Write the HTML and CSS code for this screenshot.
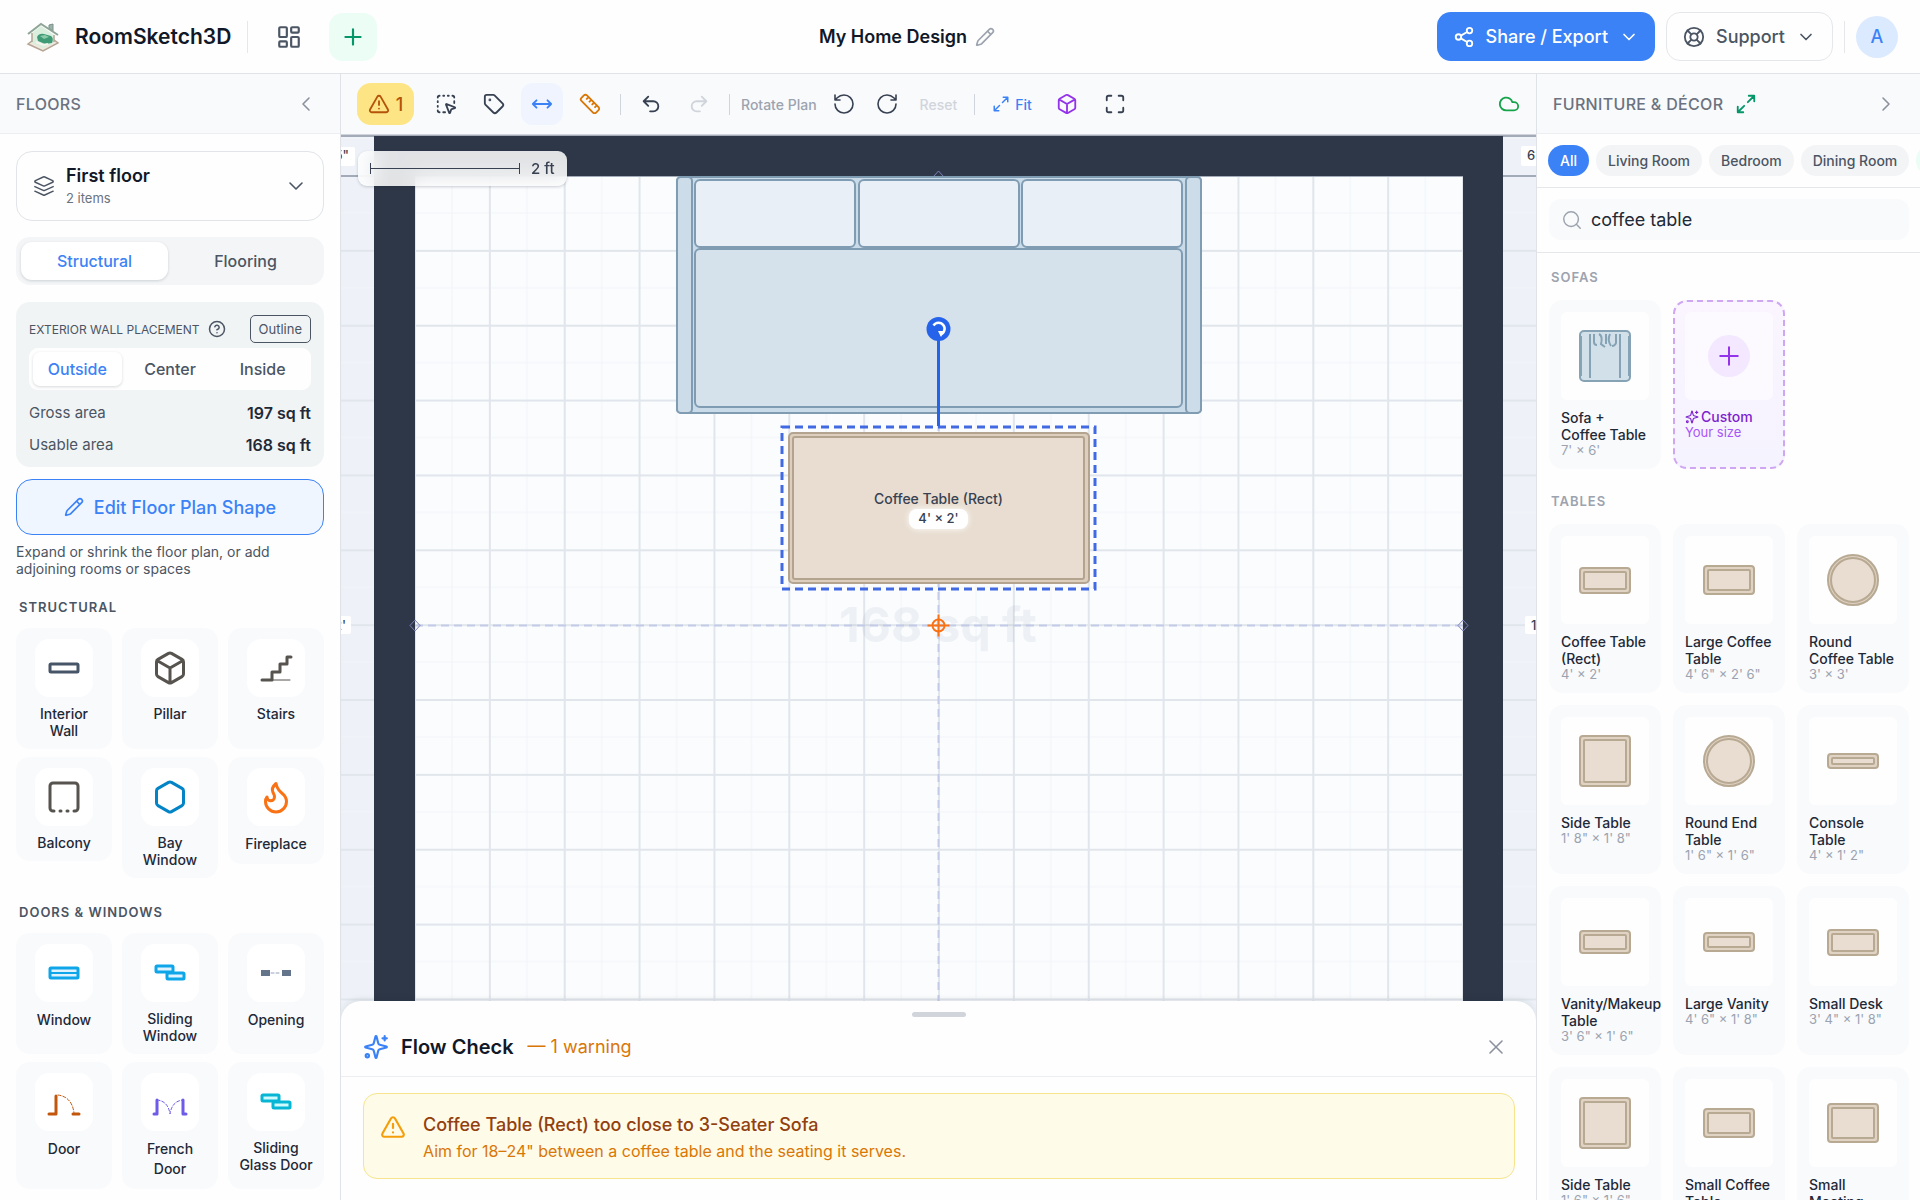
FILE: index.html
```html
<!DOCTYPE html>
<html lang="en">
<head>
<meta charset="utf-8">
<meta name="viewport" content="width=device-width, initial-scale=1">
<title>RoomSketch3D</title>
<link rel="stylesheet" href="styles.css">
</head>
<body>
<svg class="sprite" aria-hidden="true">
  <symbol id="i-dashboard" viewBox="0 0 24 24"><rect x="3" y="3" width="7" height="9" rx="1"/><rect x="14" y="3" width="7" height="5" rx="1"/><rect x="14" y="12" width="7" height="9" rx="1"/><rect x="3" y="16" width="7" height="5" rx="1"/></symbol>
  <symbol id="i-plus" viewBox="0 0 24 24"><path d="M5 12h14M12 5v14"/></symbol>
  <symbol id="i-pencil" viewBox="0 0 24 24"><path d="M21.174 6.812a1 1 0 0 0-3.986-3.987L3.842 16.174a2 2 0 0 0-.5.83l-1.321 4.352a.5.5 0 0 0 .623.622l4.353-1.32a2 2 0 0 0 .83-.497zM15 5l4 4"/></symbol>
  <symbol id="i-share" viewBox="0 0 24 24"><circle cx="18" cy="5" r="3"/><circle cx="6" cy="12" r="3"/><circle cx="18" cy="19" r="3"/><path d="M8.59 13.51l6.83 3.98M15.41 6.51l-6.82 3.98"/></symbol>
  <symbol id="i-buoy" viewBox="0 0 24 24"><circle cx="12" cy="12" r="10"/><circle cx="12" cy="12" r="4"/><path d="M4.93 4.93l4.24 4.24M14.83 9.17l4.24-4.24M14.83 14.83l4.24 4.24M9.17 14.83l-4.24 4.24"/></symbol>
  <symbol id="i-down" viewBox="0 0 24 24"><path d="M6 9l6 6 6-6"/></symbol>
  <symbol id="i-left" viewBox="0 0 24 24"><path d="M15 18l-6-6 6-6"/></symbol>
  <symbol id="i-right" viewBox="0 0 24 24"><path d="M9 18l6-6-6-6"/></symbol>
  <symbol id="i-layers" viewBox="0 0 24 24"><path d="M12.83 2.18a2 2 0 0 0-1.66 0L2.6 6.08a1 1 0 0 0 0 1.83l8.58 3.91a2 2 0 0 0 1.66 0l8.58-3.9a1 1 0 0 0 0-1.83ZM22 17.65l-9.17 4.16a2 2 0 0 1-1.66 0L2 17.65M22 12.65l-9.17 4.16a2 2 0 0 1-1.66 0L2 12.65"/></symbol>
  <symbol id="i-help" viewBox="0 0 24 24"><circle cx="12" cy="12" r="10"/><path d="M9.09 9a3 3 0 0 1 5.83 1c0 2-3 3-3 3M12 17h.01"/></symbol>
  <symbol id="i-alert" viewBox="0 0 24 24"><path d="M21.73 18l-8-14a2 2 0 0 0-3.48 0l-8 14A2 2 0 0 0 4 21h16a2 2 0 0 0 1.73-3M12 9v4M12 17h.01"/></symbol>
  <symbol id="i-select" viewBox="0 0 24 24"><path d="M12.034 12.681a.498.498 0 0 1 .647-.647l9 3.5a.5.5 0 0 1-.033.943l-3.444 1.068a1 1 0 0 0-.66.66l-1.067 3.443a.5.5 0 0 1-.943.033zM5 3a2 2 0 0 0-2 2M19 3a2 2 0 0 1 2 2M5 21a2 2 0 0 1-2-2M9 3h1M9 21h2M14 3h1M3 9v1M21 9v2M3 14v1"/></symbol>
  <symbol id="i-tag" viewBox="0 0 24 24"><path d="M12.586 2.586A2 2 0 0 0 11.172 2H4a2 2 0 0 0-2 2v7.172a2 2 0 0 0 .586 1.414l8.704 8.704a2.426 2.426 0 0 0 3.42 0l6.58-6.58a2.426 2.426 0 0 0 0-3.42z"/><circle cx="7.5" cy="7.5" r=".5"/></symbol>
  <symbol id="i-horizontal" viewBox="0 0 24 24"><path d="M18 8l4 4-4 4M2 12h20M6 8l-4 4 4 4"/></symbol>
  <symbol id="i-ruler" viewBox="0 0 24 24"><path d="M21.3 15.3a2.4 2.4 0 0 1 0 3.4l-2.6 2.6a2.4 2.4 0 0 1-3.4 0L2.7 8.7a2.41 2.41 0 0 1 0-3.4l2.6-2.6a2.41 2.41 0 0 1 3.4 0ZM14.5 12.5l2-2M11.5 9.5l2-2M8.5 6.5l2-2M17.5 15.5l2-2"/></symbol>
  <symbol id="i-undo" viewBox="0 0 24 24"><path d="M9 14L4 9l5-5M4 9h10.5a5.5 5.5 0 0 1 0 11H11"/></symbol>
  <symbol id="i-redo" viewBox="0 0 24 24"><path d="M15 14l5-5-5-5M20 9H9.500a5.500 5.500 0 0 0 0 11H13"/></symbol>
  <symbol id="i-ccw" viewBox="0 0 24 24"><path d="M3 12a9 9 0 1 0 9-9 9.750 9.750 0 0 0-6.740 2.740L3 8M3 3v5h5"/></symbol>
  <symbol id="i-cw" viewBox="0 0 24 24"><path d="M21 12a9 9 0 1 1-9-9c2.520 0 4.930 1 6.740 2.740L21 8M21 3v5h-5"/></symbol>
  <symbol id="i-expand" viewBox="0 0 24 24"><path d="M15 3h6v6M9 21H3v-6M21 3l-7 7M3 21l7-7"/></symbol>
  <symbol id="i-box" viewBox="0 0 24 24"><path d="M21 8a2 2 0 0 0-1-1.730l-7-4a2 2 0 0 0-2 0l-7 4A2 2 0 0 0 3 8v8a2 2 0 0 0 1 1.730l7 4a2 2 0 0 0 2 0l7-4A2 2 0 0 0 21 16ZM3.300 7l8.700 5 8.700-5M12 22V12"/></symbol>
  <symbol id="i-hexagon" viewBox="0 0 24 24"><path d="M21 16V8a2 2 0 0 0-1-1.730l-7-4a2 2 0 0 0-2 0l-7 4A2 2 0 0 0 3 8v8a2 2 0 0 0 1 1.730l7 4a2 2 0 0 0 2 0l7-4A2 2 0 0 0 21 16z"/></symbol>
  <symbol id="i-full" viewBox="0 0 24 24"><path d="M8 3H5a2 2 0 0 0-2 2v3M21 8V5a2 2 0 0 0-2-2h-3M3 16v3a2 2 0 0 0 2 2h3M16 21h3a2 2 0 0 0 2-2v-3"/></symbol>
  <symbol id="i-cloud" viewBox="0 0 24 24"><path d="M17.500 19H9a7 7 0 1 1 6.710-9h1.790a4.500 4.500 0 1 1 0 9Z"/></symbol>
  <symbol id="i-search" viewBox="0 0 24 24"><circle cx="11" cy="11" r="8"/><path d="M21 21l-4.300-4.300"/></symbol>
  <symbol id="i-close" viewBox="0 0 24 24"><path d="M18 6L6 18M6 6l12 12"/></symbol>
  <symbol id="i-flame" viewBox="0 0 24 24"><path d="M8.500 14.500A2.500 2.500 0 0 0 11 12c0-1.380-.5-2-1-3-1.072-2.143-.224-4.054 2-6 .5 2.500 2 4.900 4 6.500 2 1.600 3 3.500 3 5.500a7 7 0 1 1-14 0c0-1.153.433-2.294 1-3a2.500 2.500 0 0 0 2.500 2.500z"/></symbol>
  <symbol id="i-sparkles" viewBox="0 0 24 24"><path d="M9.937 15.500A2 2 0 0 0 8.500 14.063l-6.135-1.582a.5.5 0 0 1 0-.962L8.500 9.936A2 2 0 0 0 9.937 8.500l1.582-6.135a.5.5 0 0 1 .963 0L14.063 8.500A2 2 0 0 0 15.500 9.937l6.135 1.581a.5.5 0 0 1 0 .964L15.500 14.063a2 2 0 0 0-1.437 1.437l-1.582 6.135a.5.5 0 0 1-.963 0zM20 2v4M22 4h-4"/><circle cx="4" cy="20" r="1.500"/></symbol>
</svg>

<div class="app">
  <header class="topbar">
    <div class="brand">
      <svg class="logo" viewBox="0 0 34 32" aria-hidden="true">
        <path d="M2 23l4-3 22-1 4 3-15 8z" fill="#efe8de" stroke="#b5a595" stroke-width="1.500"/>
        <path d="M6 12L15 5l13 9v8l-11 5-11-5z" fill="#d9eedd"/>
        <path d="M23 4l4-1v7l-4-3z" fill="#9db3ad" stroke="#78938a"/>
        <path d="M2 13L15 3l17 11" fill="none" stroke="#8fa596" stroke-width="2"/>
        <path d="M6 12v9M28 14v7" stroke="#b5a595" stroke-width="1.500"/>
        <path d="M11 16q2-4 7-3l7 2q3 2 1 7l-7 1-7-3z" fill="#3f9a75"/>
        <path d="M14 15l5-1 4 2-5 2z" fill="#8bcbaa"/>
        <path d="M10 21l7 3 5-1" fill="none" stroke="#f6f2ec" stroke-width="2"/>
      </svg>
      <span class="brand-name">RoomSketch3D</span>
      <span class="rule"></span>
      <button class="icon-btn" aria-label="Dashboard"><svg class="icon s26"><use href="#i-dashboard"/></svg></button>
      <button class="icon-btn add" aria-label="New plan"><svg class="icon s26"><use href="#i-plus"/></svg></button>
    </div>
    <button class="title-btn"><span>My Home Design</span><svg class="icon s20"><use href="#i-pencil"/></svg></button>
    <div class="actions">
      <button class="btn primary"><svg class="icon s22"><use href="#i-share"/></svg><span>Share / Export</span><svg class="icon s20"><use href="#i-down"/></svg></button>
      <button class="btn outline"><svg class="icon s22"><use href="#i-buoy"/></svg><span>Support</span><svg class="icon s20"><use href="#i-down"/></svg></button>
      <span class="rule"></span>
      <button class="avatar">A</button>
    </div>
  </header>

  <div class="workspace">
    <aside class="panel left">
      <div class="panel-head"><h2>FLOORS</h2><button class="plain" aria-label="Collapse floors"><svg class="icon s24 thin"><use href="#i-left"/></svg></button></div>
      <div class="left-body">
        <button class="floor">
          <svg class="icon s22 thin"><use href="#i-layers"/></svg>
          <span class="floor-text"><b>First floor</b><small>2 items</small></span>
          <svg class="icon s24 thin"><use href="#i-down"/></svg>
        </button>
        <div class="tabs"><button class="on">Structural</button><button>Flooring</button></div>
        <section class="placement">
          <div class="placement-head"><span>EXTERIOR WALL PLACEMENT</span><svg class="icon s18"><use href="#i-help"/></svg><button>Outline</button></div>
          <div class="segment"><button class="on">Outside</button><button>Center</button><button>Inside</button></div>
          <dl><div><dt>Gross area</dt><dd>197 sq ft</dd></div><div><dt>Usable area</dt><dd>168 sq ft</dd></div></dl>
        </section>
        <button class="edit"><svg class="icon s20"><use href="#i-pencil"/></svg><span>Edit Floor Plan Shape</span></button>
        <p class="hint">Expand or shrink the floor plan, or add adjoining rooms or spaces</p>

        <section class="group">
          <h3>STRUCTURAL</h3>
          <div class="tiles">
            <button class="tile"><span class="tile-icon"><svg viewBox="0 0 36 36" class="slate"><rect x="4" y="14" width="28" height="8" rx="1"/></svg></span><span class="tight">Interior Wall</span></button>
            <button class="tile"><span class="tile-icon"><svg class="icon s36 stone"><use href="#i-box"/></svg></span><span class="tight">Pillar</span></button>
            <button class="tile"><span class="tile-icon"><svg viewBox="0 0 36 36" class="stone"><path d="M4 30h28" stroke-width="1" /><path d="M4 30h10v-8h8v-8h7V7h4"/></svg></span><span class="tight">Stairs</span></button>
            <button class="tile short"><span class="tile-icon"><svg viewBox="0 0 36 36" class="stone"><path d="M8 32H7a3 3 0 0 1-3-3V7a3 3 0 0 1 3-3h22a3 3 0 0 1 3 3v22a3 3 0 0 1-3 3h-1M14 32h1M21 32h1"/></svg></span><span class="tight">Balcony</span></button>
            <button class="tile"><span class="tile-icon"><svg class="icon s36 blue"><use href="#i-hexagon"/></svg></span><span class="tight">Bay Window</span></button>
            <button class="tile short"><span class="tile-icon"><svg class="icon s36 orange"><use href="#i-flame"/></svg></span><span>Fireplace</span></button>
          </div>
        </section>

        <section class="group">
          <h3>DOORS &amp; WINDOWS</h3>
          <div class="tiles">
            <button class="tile"><span class="tile-icon"><svg viewBox="0 0 36 36" class="sky"><rect x="4" y="13" width="28" height="10" rx="1" fill="#e0f2fe"/><path d="M4 18h28" stroke-width="2"/></svg></span><span>Window</span></button>
            <button class="tile"><span class="tile-icon"><svg viewBox="0 0 36 36" class="sky"><rect x="4" y="11" width="17" height="6" rx="1" fill="#e0f2fe"/><rect x="15" y="18" width="17" height="6" rx="1" fill="#e0f2fe"/></svg></span><span class="tight">Sliding Window</span></button>
            <button class="tile"><span class="tile-icon"><svg viewBox="0 0 36 36"><path d="M3 15h9v6H3zM24 15h9v6h-9z" fill="#64748b"/><path d="M13 18h10" stroke="#94a3b8" stroke-width="1" stroke-dasharray="3 2"/></svg></span><span>Opening</span></button>
            <button class="tile"><span class="tile-icon"><svg viewBox="0 0 36 36" class="rust"><path d="M3 30h7V12M27 30h6"/><path d="M12 11q14 2 16 18" stroke-width="1" stroke-dasharray="3 2"/></svg></span><span>Door</span></button>
            <button class="tile"><span class="tile-icon"><svg viewBox="0 0 36 36" class="violet"><path d="M2 30h3V16M34 30h-3V16"/><path d="M5 16q11 1 13 14Q20 17 31 16" stroke-width="1" stroke-dasharray="3 2"/></svg></span><span>French Door</span></button>
            <button class="tile"><span class="tile-icon"><svg viewBox="0 0 36 36" class="teal"><rect x="4" y="11" width="17" height="6" rx="1" fill="#cffafe"/><rect x="15" y="18" width="17" height="6" rx="1" fill="#cffafe"/></svg></span><span class="tight">Sliding Glass Door</span></button>
          </div>
        </section>
      </div>
    </aside>

    <main class="center">
      <div class="toolbar">
        <button class="warn"><svg class="icon s22"><use href="#i-alert"/></svg>1</button>
        <button class="tool" aria-label="Select"><svg class="icon s22"><use href="#i-select"/></svg></button>
        <button class="tool" aria-label="Labels"><svg class="icon s22"><use href="#i-tag"/></svg></button>
        <button class="tool active" aria-label="Dimensions"><svg class="icon s22"><use href="#i-horizontal"/></svg></button>
        <button class="tool amber" aria-label="Measure"><svg class="icon s22"><use href="#i-ruler"/></svg></button>
        <span class="sep"></span>
        <button class="tool" aria-label="Undo"><svg class="icon s22"><use href="#i-undo"/></svg></button>
        <button class="tool off" aria-label="Redo" disabled><svg class="icon s22"><use href="#i-redo"/></svg></button>
        <span class="sep"></span>
        <span class="tool-label">Rotate Plan</span>
        <button class="tool slim" aria-label="Rotate left"><svg class="icon s24 thin"><use href="#i-ccw"/></svg></button>
        <button class="tool slim" aria-label="Rotate right"><svg class="icon s24 thin"><use href="#i-cw"/></svg></button>
        <button class="text-tool off" disabled>Reset</button>
        <span class="sep"></span>
        <button class="text-tool fit"><svg class="icon s18"><use href="#i-expand"/></svg>Fit</button>
        <button class="tool purple" aria-label="3D view"><svg class="icon s22"><use href="#i-box"/></svg></button>
        <button class="tool" aria-label="Full screen"><svg class="icon s22"><use href="#i-full"/></svg></button>
        <span class="saved"><svg class="icon s22"><use href="#i-cloud"/></svg></span>
      </div>

      <div class="stage">
        <svg class="plan" viewBox="341 135 1195 1065" preserveAspectRatio="xMidYMin slice">
          <defs>
            <pattern id="grid" x="414" y="175" width="74.860" height="74.860" patternUnits="userSpaceOnUse">
              <path d="M38 0v74.860M0 38h74.860" stroke="#f1f4f8" fill="none"/>
              <path d="M1 0v74.860M0 1h74.860" stroke="#e1e6ec" stroke-width="2" fill="none"/>
            </pattern>
          </defs>
          <rect x="341" y="135" width="1195" height="1065" fill="#eef2f8"/>
          <rect x="415" y="176" width="1048" height="898" fill="#fafcfe"/>
          <rect x="341" y="135" width="1195" height="1065" fill="url(#grid)"/>
          <path d="M341 136h1195M341 176h1195" stroke="#a3abb8" stroke-width="2"/>
          <path d="M374 136h1129v978H374zM415 176v898h1048V176z" fill="#2d3748" fill-rule="evenodd"/>
          <g class="dims">
            <rect x="317" y="147" width="38" height="19" rx="2"/><text x="349" y="160" text-anchor="end">6' 5"</text>
            <rect x="1521" y="146" width="50" height="20" rx="2"/><text x="1527" y="160">6' 5"</text>
            <rect x="317" y="616" width="34" height="18" rx="2"/><text x="346" y="630" text-anchor="end">12'</text>
            <rect x="1525" y="616" width="50" height="18" rx="2"/><text x="1531" y="630">12'</text>
          </g>
          <text class="watermark" x="938" y="642">168 sq ft</text>
          <path d="M415 625.500h1048M938.500 176v898" stroke="#c3cbe8" stroke-width="2" stroke-dasharray="8 5" fill="none"/>
          <path d="M415 620l5 5.500-5 5.500-5-5.500zM1463 620l5 5.500-5 5.500-5-5.500zM938.500 171l5 5.500-5 5.500-5-5.500z" fill="none" stroke="#7d7fb8" stroke-width="1"/>
          <g stroke="#7f9cb3" stroke-width="2">
            <rect x="677" y="177" width="524" height="236" rx="4" fill="#c9dae8"/>
            <rect x="677" y="177" width="15" height="236" rx="4" fill="#cddce9"/>
            <rect x="1186" y="177" width="15" height="236" rx="4" fill="#cddce9"/>
            <rect x="695" y="180" width="160" height="67" rx="5" fill="#e8eff6"/>
            <rect x="859" y="180" width="160" height="67" rx="5" fill="#e8eff6"/>
            <rect x="1022" y="180" width="160" height="67" rx="5" fill="#e8eff6"/>
            <rect x="695" y="249" width="487" height="158" rx="5" fill="#d5e1eb"/>
          </g>
          <g stroke="#b4a48f" stroke-width="2">
            <rect x="789" y="433" width="300" height="150" rx="4" fill="#ddcfbd"/>
            <rect x="793" y="437" width="291" height="142" rx="2" fill="#e8ddd0"/>
          </g>
          <rect x="782" y="427" width="313" height="162" fill="none" stroke="#4169e1" stroke-width="3" stroke-dasharray="8 5"/>
          <path d="M938.500 426v-86" stroke="#2563eb" stroke-width="3"/>
          <circle cx="938.500" cy="329" r="12" fill="#2563eb"/>
          <path d="M933.500 325.500a6 6 0 1 1 6.500 9" fill="none" stroke="#fff" stroke-width="2.500"/><path d="M938 331h6l-3 6z" fill="#fff"/>
          <text class="item-name" x="938.500" y="504">Coffee Table (Rect)</text>
          <rect class="pill" x="909" y="509" width="59" height="20" rx="8"/>
          <text class="item-size" x="938.500" y="523">4' × 2'</text>
          <g fill="none" stroke="#f97316" stroke-width="2"><circle cx="938.500" cy="625.500" r="6"/><path d="M927.500 625.500h22M938.500 614.500v22"/></g>
        </svg>
        <div class="scale"><span class="scale-bar"></span><span>2 ft</span></div>
        <section class="sheet">
          <span class="grip"></span>
          <div class="sheet-head">
            <svg class="icon s26 bright"><use href="#i-sparkles"/></svg>
            <h2>Flow Check</h2><span class="count">— 1 warning</span>
            <button class="plain" aria-label="Close"><svg class="icon s24 thin"><use href="#i-close"/></svg></button>
          </div>
          <div class="sheet-body">
            <div class="alert">
              <svg class="icon s26"><use href="#i-alert"/></svg>
              <div><h3>Coffee Table (Rect) too close to 3-Seater Sofa</h3><p>Aim for 18–24" between a coffee table and the seating it serves.</p></div>
            </div>
          </div>
        </section>
      </div>
    </main>

    <aside class="panel right">
      <div class="panel-head"><h2>FURNITURE &amp; DÉCOR</h2><svg class="icon s22 green"><use href="#i-expand"/></svg><button class="plain" aria-label="Collapse furniture"><svg class="icon s24 thin"><use href="#i-right"/></svg></button></div>
      <div class="chips"><button class="on">All</button><button>Living Room</button><button>Bedroom</button><button>Dining Room</button><button class="leaf" aria-label="More rooms"></button></div>
      <div class="search"><label><svg class="icon s22 thin"><use href="#i-search"/></svg><input type="text" aria-label="Search furniture" value="coffee table"></label></div>
      <div class="catalog">
        <h3>SOFAS</h3>
        <div class="cards">
          <button class="card"><span class="thumb"><svg width="52" height="52" class="sofa"><rect x="1" y="1" width="50" height="50" rx="4"/><path d="M2 6v40M11 4v44M41 4v44M50 6v40"/><path d="M15 4v8q0 3 3 3M20 4q4 2 2 10l4 3M27 4v10M31 4q-3 6 1 12M37 4v9q-1 3-4 3"/></svg></span><b>Sofa + Coffee Table</b><small>7' × 6'</small></button>
          <button class="card custom"><span class="thumb"><span class="disc"><svg class="icon s30 thin"><use href="#i-plus"/></svg></span></span><b><svg class="icon s14"><use href="#i-sparkles"/></svg>Custom</b><small>Your size</small></button>
        </div>
        <h3>TABLES</h3>
        <div class="cards">
          <button class="card"><span class="thumb"><svg width="52" height="27" class="wood"><rect x="1" y="1" width="50" height="25" rx="3"/><rect class="in" x="5" y="5" width="42" height="17" rx="1"/></svg></span><b>Coffee Table (Rect)</b><small>4' × 2'</small></button>
          <button class="card"><span class="thumb"><svg width="52" height="30" class="wood"><rect x="1" y="1" width="50" height="28" rx="3"/><rect class="in" x="5" y="5" width="42" height="20" rx="1"/></svg></span><b>Large Coffee Table</b><small>4' 6" × 2' 6"</small></button>
          <button class="card"><span class="thumb"><svg width="52" height="52" class="wood"><circle cx="26" cy="26" r="25"/><circle class="in" cx="26" cy="26" r="22"/></svg></span><b>Round Coffee Table</b><small>3' × 3'</small></button>
          <button class="card"><span class="thumb"><svg width="52" height="52" class="wood"><rect x="1" y="1" width="50" height="50" rx="3"/><rect class="in" x="5" y="5" width="42" height="42" rx="1"/></svg></span><b>Side Table</b><small>1' 8" × 1' 8"</small></button>
          <button class="card"><span class="thumb"><svg width="52" height="52" class="wood"><circle cx="26" cy="26" r="25"/><circle class="in" cx="26" cy="26" r="22"/></svg></span><b>Round End Table</b><small>1' 6" × 1' 6"</small></button>
          <button class="card"><span class="thumb"><svg width="52" height="16" class="wood"><rect x="1" y="1" width="50" height="14" rx="3"/><rect class="in" x="5" y="5" width="42" height="6" rx="1"/></svg></span><b>Console Table</b><small>4' × 1' 2"</small></button>
          <button class="card"><span class="thumb"><svg width="52" height="24" class="wood"><rect x="1" y="1" width="50" height="22" rx="3"/><rect class="in" x="5" y="5" width="42" height="14" rx="1"/></svg></span><b>Vanity/Makeup Table</b><small>3' 6" × 1' 6"</small></button>
          <button class="card"><span class="thumb"><svg width="52" height="20" class="wood"><rect x="1" y="1" width="50" height="18" rx="3"/><rect class="in" x="5" y="5" width="42" height="10" rx="1"/></svg></span><b>Large Vanity</b><small>4' 6" × 1' 8"</small></button>
          <button class="card"><span class="thumb"><svg width="52" height="27" class="wood"><rect x="1" y="1" width="50" height="25" rx="3"/><rect class="in" x="5" y="5" width="42" height="17" rx="1"/></svg></span><b>Small Desk</b><small>3' 4" × 1' 8"</small></button>
          <button class="card"><span class="thumb"><svg width="52" height="52" class="wood"><rect x="1" y="1" width="50" height="50" rx="3"/><rect class="in" x="5" y="5" width="42" height="42" rx="1"/></svg></span><b>Side Table</b><small>1' 6" × 1' 6"</small></button>
          <button class="card"><span class="thumb"><svg width="52" height="30" class="wood"><rect x="1" y="1" width="50" height="28" rx="3"/><rect class="in" x="5" y="5" width="42" height="20" rx="1"/></svg></span><b>Small Coffee Table</b></button>
          <button class="card"><span class="thumb"><svg width="52" height="40" class="wood"><rect x="1" y="1" width="50" height="38" rx="3"/><rect class="in" x="5" y="5" width="42" height="30" rx="1"/></svg></span><b>Small Meeting</b></button>
        </div>
      </div>
    </aside>
  </div>
</div>
</body>
</html>
```
FILE: styles.css
```css
*, *::before, *::after { box-sizing: border-box; }
body { margin: 0; font-family: Inter, "Liberation Sans", sans-serif; color: #1f2937; background: #fefefe; }
button { font: inherit; color: inherit; background: none; border: 0; padding: 0; margin: 0; cursor: pointer; }
button:disabled { cursor: default; }
h2, h3, p, dl, dd { margin: 0; }
.sprite { position: absolute; width: 0; height: 0; }

.icon { display: block; flex: none; fill: none; stroke: currentColor; stroke-width: 2; stroke-linecap: round; stroke-linejoin: round; }
.thin { stroke-width: 1.6; }
.s14 { width: 14px; height: 14px; }
.s18 { width: 18px; height: 18px; }
.s20 { width: 20px; height: 20px; }
.s22 { width: 22px; height: 22px; }
.s24 { width: 24px; height: 24px; }
.s26 { width: 26px; height: 26px; }
.s30 { width: 30px; height: 30px; }
.s36 { width: 36px; height: 36px; }

.app { display: flex; flex-direction: column; height: 100vh; min-height: 700px; overflow: hidden; }

/* Top bar */
.topbar { flex: none; display: flex; align-items: center; justify-content: space-between; height: 74px; padding: 0 22px 0 26px; border-bottom: 1px solid #e0e3e7; }
.brand, .actions { display: flex; align-items: center; }
.logo { width: 34px; height: 32px; margin-right: 15px; }
.brand-name { font-size: 21px; font-weight: 600; color: #111827; }
.rule { width: 1px; height: 32px; background: #e5e7eb; }
.brand .rule { margin: 0 17px 0 16px; }
.icon-btn { display: grid; place-items: center; width: 48px; height: 48px; border-radius: 14px; color: #4b5563; }
.icon-btn.add { margin-left: 16px; background: #ecfdf5; color: #059669; }
.title-btn { display: flex; align-items: center; gap: 8px; font-size: 18px; font-weight: 600; color: #111827; }
.title-btn .icon { color: #9ca3af; }
.btn { display: flex; align-items: center; gap: 11px; height: 49px; padding: 0 16px; border-radius: 14px; font-size: 18px; font-weight: 500; }
.btn.primary { background: #3b82f6; color: #fff; }
.btn.outline { margin: 0 11px; border: 1px solid #e5e7eb; color: #4b5563; }
.avatar { width: 42px; height: 42px; margin-left: 11px; border-radius: 50%; background: #dbeafe; color: #3b82f6; font-size: 18px; font-weight: 500; }

/* Side panels */
.workspace { flex: 1; display: flex; min-height: 0; }
.panel { flex: none; display: flex; flex-direction: column; min-height: 0; overflow: hidden; }
.panel.left { width: 341px; border-right: 1px solid #dfe3e8; }
.panel.right { width: 384px; border-left: 1px solid #dfe3e8; }
.panel-head { flex: none; display: flex; align-items: center; gap: 12px; height: 60px; padding: 0 22px 0 16px; background: #f8fafc; border-bottom: 1px solid #eceff2; }
.panel-head h2 { font-size: 16px; font-weight: 500; letter-spacing: .02em; color: #6b7280; }
.panel-head .green { color: #059669; }
.plain { display: grid; place-items: center; margin-left: auto; color: #8b929e; }
.left-body { padding: 17px 16px 16px; overflow: hidden; }

.floor { display: flex; align-items: center; gap: 11px; width: 100%; height: 70px; padding: 0 15px 0 16px; border: 1px solid #e1e4e8; border-radius: 16px; text-align: left; color: #4b5563; }
.floor-text { flex: 1; }
.floor b, .floor small { display: block; }
.floor b { font-size: 18px; font-weight: 600; line-height: 24px; color: #111827; }
.floor small { font-size: 13px; line-height: 20px; color: #6b7280; }
.tabs { display: flex; gap: 4px; height: 48px; margin-top: 16px; padding: 5px; border-radius: 14px; background: #f3f5f6; }
.tabs button { flex: 1; border-radius: 11px; font-size: 16px; font-weight: 500; color: #4b5563; }
.tabs .on, .segment .on { background: #fff; color: #3b82f6; box-shadow: 0 1px 3px rgba(15, 23, 42, .16); }
.placement { margin-top: 17px; padding: 12px 13px 6px; border-radius: 14px; background: #f1f4f5; }
.placement-head { display: flex; align-items: center; gap: 8px; height: 30px; font-size: 12px; color: #4b5563; white-space: nowrap; }
.placement-head button { margin-left: auto; height: 28px; padding: 0 8px; border: 1px solid #4b5563; border-radius: 5px; font-size: 13px; }
.segment { display: flex; gap: 4px; height: 42px; margin-top: 4px; padding: 4px; border-radius: 9px; background: #fefefe; }
.segment button { flex: 1; border-radius: 7px; font-size: 16px; font-weight: 500; color: #4b5563; }
.placement dl { margin-top: 7px; font-size: 15px; line-height: 32px; }
.placement dl div { display: flex; justify-content: space-between; }
.placement dt { color: #4b5563; }
.placement dd { font-size: 16px; font-weight: 600; color: #1f2937; }
.edit { display: flex; align-items: center; justify-content: center; gap: 10px; width: 100%; height: 56px; margin-top: 12px; border: 1px solid #3b82f6; border-radius: 16px; background: #eff6ff; color: #3b82f6; font-size: 18px; font-weight: 500; }
.hint { margin-top: 8px; font-size: 14px; line-height: 17px; color: #4b5563; }
.group { margin-top: 22px; }
.group + .group { margin-top: 26px; }
.group h3 { margin: 0 3px 12px; font-size: 13px; font-weight: 600; line-height: 17px; letter-spacing: 1px; color: #4b5563; }
.tiles { display: grid; grid-template-columns: repeat(3, 1fr); gap: 8px 10px; }
.tile { display: flex; flex-direction: column; align-items: center; padding: 11px 4px 10px; border-radius: 14px; background: #f8fafc; font-size: 14px; font-weight: 500; line-height: 20px; }
.tile.short { align-self: start; }
.tile .tight { line-height: 17px; }
.tile-icon + span { max-width: 76px; }
.tile-icon { display: grid; place-items: center; width: 58px; height: 58px; margin-bottom: 8px; border-radius: 14px; background: #fff; }
.tile-icon svg { width: 36px; height: 36px; fill: none; stroke-width: 3; stroke-linecap: round; stroke-linejoin: round; }
.tile-icon svg.icon { stroke-width: 2; }
.slate { stroke: #475569; }
.stone { stroke: #57534e; }
.blue { stroke: #0284c7; }
.sky { stroke: #0ea5e9; }
.orange { stroke: #f97316; }
.rust { stroke: #c2570c; }
.violet { stroke: #6d5bea; }
.teal { stroke: #06b6d4; }

/* Toolbar */
.center { flex: 1; display: flex; flex-direction: column; min-width: 0; }
.toolbar { flex: none; display: flex; align-items: center; gap: 6px; height: 61px; padding: 0 16px; background: #f8fafc; border-bottom: 1px solid #d1d5db; color: #4b5563; }
.warn { display: flex; align-items: center; justify-content: center; gap: 6px; width: 57px; height: 42px; margin-right: 5px; border-radius: 14px; background: #fde585; color: #b45309; font-size: 18px; font-weight: 500; }
.tool { display: grid; place-items: center; flex: none; width: 42px; height: 42px; border-radius: 12px; color: #374151; }
.tool.slim { width: 37px; }
.tool.active { background: #eff4ff; color: #3b82f6; }
.tool.amber { color: #d97706; }
.tool.purple { color: #9333ea; }
.off, .tool.off { color: #d1d5db; }
.sep { flex: none; width: 1px; height: 21px; margin: 0 3px; background: #d1d5db; }
.tool-label { margin: 0 3px 0 2px; font-size: 14px; font-weight: 500; color: #9ca3af; white-space: nowrap; }
.text-tool { display: flex; align-items: center; gap: 5px; height: 42px; padding: 0 8px; font-size: 14px; font-weight: 500; }
.text-tool.fit { color: #3b82f6; }
.saved { margin-left: auto; color: #16a34a; }

/* Plan canvas */
.stage { position: relative; flex: 1; min-height: 0; overflow: hidden; }
.plan { display: block; width: 100%; height: 100%; }
.dims rect { fill: #fff; }
.dims text { font-size: 13px; font-weight: 500; fill: #374151; }
.watermark { font-size: 48px; font-weight: 700; text-anchor: middle; fill: #64748b; opacity: .08; }
.item-name { font-size: 14px; font-weight: 500; text-anchor: middle; fill: #374151; }
.item-size { font-size: 13px; font-weight: 500; text-anchor: middle; fill: #374151; }
.pill { fill: #fff; filter: drop-shadow(0 0 3px #fff); }
.scale { position: absolute; left: 17px; top: 16px; display: flex; align-items: center; gap: 11px; height: 35px; padding: 0 12px; border-radius: 9px; background: rgba(255, 255, 255, .86); backdrop-filter: blur(10px); box-shadow: 0 1px 3px rgba(15, 23, 42, .2); font-size: 15px; font-weight: 500; color: #374151; }
.scale-bar { width: 150px; height: 11px; border: solid #374151; border-width: 0 1px; background: linear-gradient(#374151, #374151) center / 100% 1px no-repeat; }

/* Flow check sheet */
.sheet { position: absolute; left: 0; right: 0; bottom: 0; border-radius: 20px 20px 0 0; background: #fefefe; box-shadow: 0 -2px 6px rgba(15, 23, 42, .08); }
.grip { display: block; width: 54px; height: 5px; margin: 11px auto 0; border-radius: 3px; background: #d1d5db; }
.sheet-head { display: flex; align-items: center; height: 60px; padding: 0 28px 0 22px; border-bottom: 1px solid #eceef1; }
.sheet-head h2 { margin: 0 14px 0 12px; font-size: 20px; font-weight: 600; color: #111827; }
.bright { color: #3b82f6; }
.count { font-size: 18px; color: #d97706; }
.sheet-body { padding: 16px 21px 21px 22px; }
.alert { display: flex; gap: 17px; height: 86px; padding: 17px 16px; border: 1px solid #f6e58d; border-radius: 14px; background: #fefbe9; }
.alert .icon { margin-top: 3px; color: #f59e0b; }
.alert h3 { font-size: 18px; font-weight: 500; line-height: 27px; color: #92400e; }
.alert p { font-size: 16px; line-height: 26px; color: #d97706; }

/* Furniture panel */
.chips { flex: none; display: flex; gap: 7px; height: 54px; padding: 11px 11px 0; border-bottom: 1px solid #e5e7eb; overflow: hidden; }
.chips button { flex: none; height: 31px; padding: 0 12px; border-radius: 16px; background: #f3f4f6; font-size: 14px; font-weight: 500; color: #4b5563; }
.chips .on { background: #3b82f6; color: #fff; }
.chips .leaf { width: 80px; background: #ecfdf5; }
.search { flex: none; height: 65px; padding: 11px 11px 0 12px; border-bottom: 1px solid #e5e7eb; }
.search label { display: flex; align-items: center; gap: 8px; height: 41px; padding: 0 12px; border-radius: 12px; background: #f9fafb; color: #9ca3af; }
.search input { flex: 1; min-width: 0; padding: 0; border: 0; outline: 0; background: none; font: inherit; font-size: 18px; color: #1f2937; }
.catalog { padding: 0 11px 0 12px; overflow: hidden; }
.catalog h3 { margin: 15px 2px 14px; font-size: 13px; font-weight: 600; line-height: 18px; letter-spacing: 1px; color: #9ca3af; }
.cards + h3 { margin-top: 23px; }
.cards { display: grid; grid-template-columns: repeat(3, minmax(0, 1fr)); gap: 12px; }
.card { display: flex; flex-direction: column; align-items: stretch; padding: 12px; border-radius: 14px; background: #f8fafc; text-align: left; }
.thumb { display: grid; place-items: center; aspect-ratio: 1; margin-bottom: 9px; border-radius: 6px; background: #fefefe; }
.card b { display: block; font-size: 14px; font-weight: 500; line-height: 17px; color: #1f2937; }
.card small { font-size: 13px; line-height: 14px; color: #9ca3af; }
.wood { fill: #e0d3c3; stroke: #b8a993; stroke-width: 2; }
.wood .in { fill: #e8ddd0; }
.sofa { fill: #d2e0ea; stroke: #86a3b5; stroke-width: 2; }
.sofa path { fill: none; }
.card.custom { padding: 10px; border: 2px dashed #cfa6f2; background: linear-gradient(#faf5ff, #f5f3ff); }
.custom .thumb { margin-bottom: 8px; background: #fcfaff; }
.disc { display: grid; place-items: center; width: 42px; height: 42px; border-radius: 50%; background: #f3e8ff; color: #9333ea; }
.card.custom b { display: flex; align-items: center; gap: 2px; color: #7e22ce; }
.card.custom small { color: #a855f7; }
```
